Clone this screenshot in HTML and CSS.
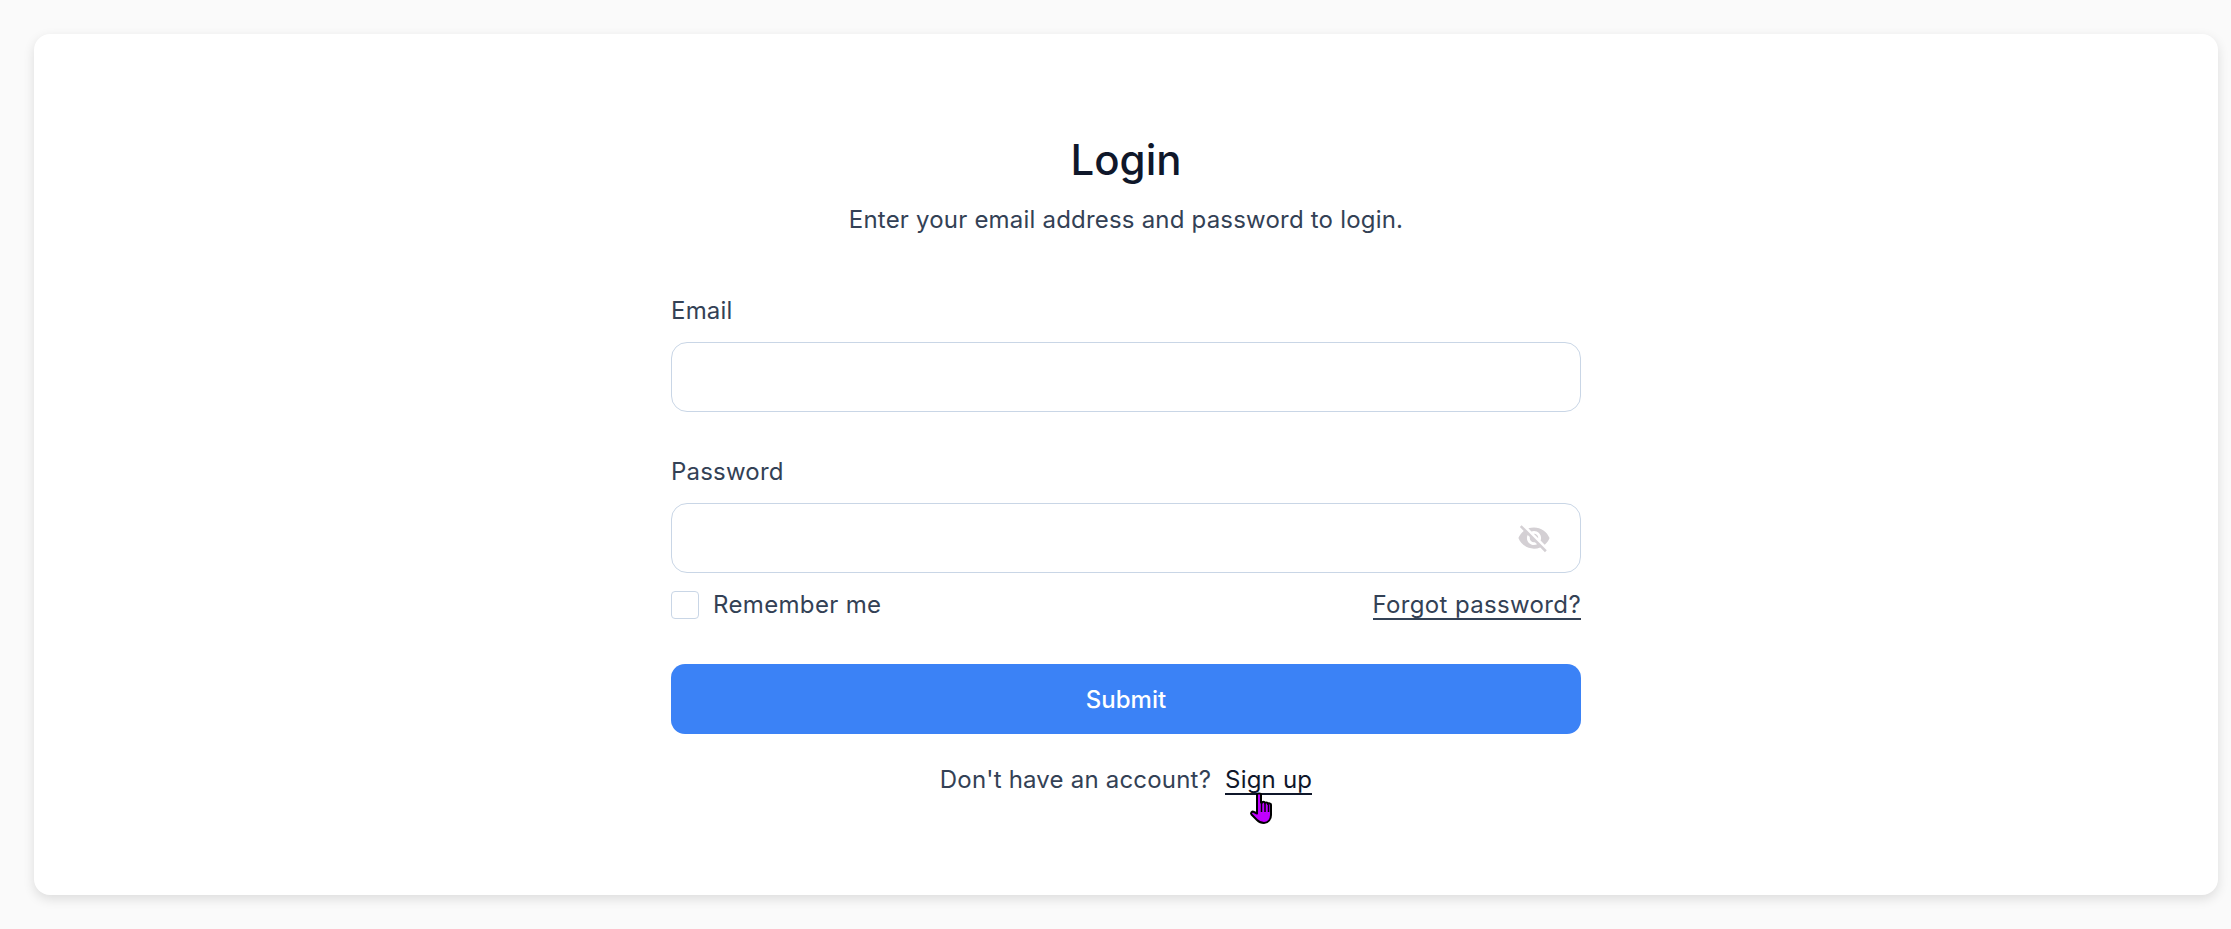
FILE: index.html
```html
<!DOCTYPE html>
<html lang="en">
<head>
    <meta charset="UTF-8">
    <title>Login</title>
    <link rel="stylesheet" href="styles.css">
</head>
<body>
    <div class="card">
        <div class="login">
            <h1>Login</h1>
            <p class="intro">Enter your email address and password to login.</p>

            <div class="form-group">
                <label for="email">Email</label>
                <input type="text" id="email">
            </div>
            <div class="form-group">
                <label for="password">Password</label>
                <div class="password-wrap">
                    <input type="password" id="password">
                    <svg class="eye" width="34" height="34" viewBox="0 0 24 24" aria-hidden="true">
                        <path fill="currentColor" d="M12 7c2.76 0 5 2.24 5 5 0 .65-.13 1.26-.36 1.83l2.92 2.92c1.51-1.26 2.7-2.89 3.43-4.75-1.73-4.39-6-7.5-11-7.5-1.4 0-2.74.25-3.98.7l2.16 2.16C10.74 7.13 11.35 7 12 7zM2 4.27l2.28 2.28.46.46C3.08 8.3 1.78 10.02 1 12c1.73 4.39 6 7.5 11 7.5 1.55 0 3.03-.3 4.38-.84l.42.42L19.73 22 21 20.73 3.27 3 2 4.27zM7.53 9.8l1.55 1.55c-.05.21-.08.43-.08.65 0 1.66 1.34 3 3 3 .22 0 .44-.03.65-.08l1.55 1.55c-.67.33-1.41.53-2.2.53-2.76 0-5-2.24-5-5 0-.79.2-1.53.53-2.2zm4.31-.78l3.15 3.15.02-.16c0-1.66-1.34-3-3-3l-.17.01z"/>
                    </svg>
                </div>
                <div class="options">
                    <label class="remember"><input type="checkbox"> Remember me</label>
                    <a href="#" class="forgot">Forgot password?</a>
                </div>
            </div>

            <button class="submit">Submit</button>

            <p class="signup">Don't have an account? <a href="#">Sign up</a></p>
            <svg class="cursor" width="28" height="36" viewBox="0 0 28 36" aria-hidden="true">
                <path fill="#c000ff" stroke="#000" stroke-width="2" stroke-linejoin="round" d="M9 2.500c0-1.400 4-1.400 4 0V10.500l1 .2c.2-1.300 2.600-1.300 2.900 0l.1.600c.4-1.200 2.600-1.200 2.900 0l.1.700c.6-1 3-.8 3 .8V23c0 4-2.600 8-7 8-3 0-5-1-7-3l-5.500-5.500c-1.300-1.600.6-3.600 2.500-2.500L9 21.500z"/>
                <path fill="none" stroke="#000" stroke-width="1.500" d="M13.500 11v9M17 12v8M20.500 12.500v7.500"/>
            </svg>
        </div>
    </div>
</body>
</html>
```

FILE: styles.css
```css
* { box-sizing: border-box; }
body { font-family: Inter, sans-serif; font-size: 24px; line-height: 36px; letter-spacing: 0.2px; color: #334155; margin: 0; padding: 34px 13px 34px 34px; background: #fafafa; }
.card { height: 861px; padding-top: 96px; background: #fff; border-radius: 16px; box-shadow: 0 4px 12px rgba(0, 0, 0, 0.12); }
.login { position: relative; width: 910px; margin: 0 auto; }
h1 { margin: 0 0 12px; font-size: 42px; line-height: 60px; font-weight: 500; letter-spacing: 0; color: #0f172a; text-align: center; }
.intro { margin: 0 0 55px; text-align: center; }
.form-group { margin-bottom: 42px; }
.form-group:last-of-type { margin-bottom: 41px; }
.form-group > label { display: block; margin-bottom: 13px; }
.form-group input[type="text"], .form-group input[type="password"] { display: block; width: 100%; height: 70px; padding: 0 24px; border: 1.5px solid #c9d6e6; border-radius: 16px; background: #fff; }
.password-wrap { position: relative; }
.eye { position: absolute; top: 18px; right: 30px; color: #d4d0d4; }
.options { display: flex; justify-content: space-between; align-items: center; margin-top: 14px; letter-spacing: 0.35px; }
.remember { display: flex; align-items: center; gap: 14px; }
.remember input { appearance: none; width: 28px; height: 28px; margin: 0; border: 1.5px solid #c9d6e6; border-radius: 4px; background: #fff; }
.forgot { color: #334155; text-decoration: none; border-bottom: 2.5px solid #334155; line-height: 27px; }
.submit { display: block; width: 100%; height: 70px; border: none; border-radius: 14px; background: #3b82f6; color: #fff; font: 500 24px Inter, sans-serif; cursor: pointer; }
.signup { margin: 28px 0 0; text-align: center; }
.signup a { display: inline-block; margin-left: 7px; color: #0f172a; text-decoration: none; border-bottom: 2.5px solid #0f172a; line-height: 27px; }
.cursor { position: absolute; left: 577px; top: 662px; }
```
